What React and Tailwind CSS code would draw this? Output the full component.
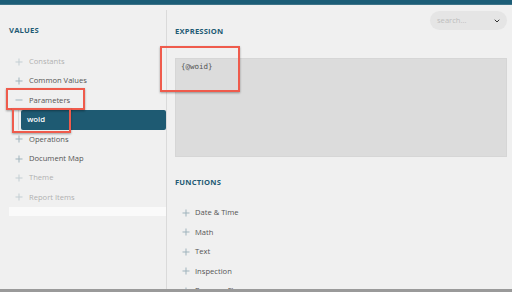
import { ChevronDown } from 'lucide-react'

const values = [
    { label: 'Constants', muted: true },
    { label: 'Common Values' },
    { label: 'Parameters', open: true },
    { label: 'woid', child: true },
    { label: 'Operations' },
    { label: 'Document Map' },
    { label: 'Theme', muted: true },
    { label: 'Report Items', muted: true },
]

const functions = ['Date & Time', 'Math', 'Text', 'Inspection', 'Program Flow']

function Plus({ muted }) {
    return (
        <svg width="8" height="8" viewBox="0 0 8 8" className="shrink-0">
            <path d="M4 0.5V7.5M0.5 4H7.5" stroke={muted ? '#c3ced3' : '#9fb3bc'} strokeWidth="1" />
        </svg>
    )
}

function Minus() {
    return (
        <svg width="8" height="8" viewBox="0 0 8 8" className="shrink-0">
            <path d="M0.5 4H7.5" stroke="#9fb3bc" strokeWidth="1" />
        </svg>
    )
}

function Heading({ children }) {
    return (
        <div className="shrink-0 text-[7.6px] leading-[11px] font-bold tracking-[0.2px] text-[#1e5a73] uppercase">
            {children}
        </div>
    )
}

export default function App() {
    return (
        <div className="relative w-[512px] h-[292px] overflow-hidden flex flex-col bg-[#f0f0f0] font-['Open_Sans',sans-serif]">
            {/* top bar */}
            <div className="h-[5px] shrink-0 bg-[#1c5d77] border-b border-[#3d7388]" />

            <div className="flex flex-1 min-h-0">
                {/* values panel */}
                <div className="w-[166px] shrink-0 flex flex-col pt-[20px]">
                    <div className="pl-[9px]">
                        <Heading>Values</Heading>
                    </div>
                    <div className="flex flex-col mt-[16px]">
                        {values.map(item => item.child ? (
                            <div key={item.label} className="flex h-[19.4px] shrink-0">
                                <div className="w-[20px] flex justify-end pr-[1px]">
                                    <div className="w-[1px] h-full bg-[#d8d8d8]" />
                                </div>
                                <div className="flex-1 ml-[1px] flex items-center pl-[6px] bg-[#1e5a72] rounded-[2px] text-[7.8px] font-semibold text-white">
                                    {item.label}
                                </div>
                            </div>
                        ) : (
                            <div key={item.label} className="flex items-center h-[19.4px] shrink-0 pl-[15px] gap-[6px]">
                                {item.open ? <Minus /> : <Plus muted={item.muted} />}
                                <span className={`text-[7.6px] ${item.muted ? 'text-[#b0b0b0]' : 'text-[#555]'}`}>
                                    {item.label}
                                </span>
                            </div>
                        ))}
                    </div>
                    <div className="ml-[9px] h-[9px] shrink-0 bg-[#fafafa]" />
                </div>

                {/* expression panel */}
                <div className="flex-1 min-w-0 flex flex-col mt-[5px] border-l border-[#dadada] pl-[8px] pr-[5px]">
                    <div className="flex justify-end shrink-0">
                        <div className="w-[77px] h-[19px] mt-[1px] rounded-full bg-[#e5e5e5] flex items-center justify-between pl-[7px] pr-[6px]">
                            <span className="text-[7.6px] text-[#bdbdbd]">search...</span>
                            <ChevronDown size={8} strokeWidth={3} className="text-[#333]" />
                        </div>
                    </div>
                    <div className="-mt-[4px] shrink-0">
                        <Heading>Expression</Heading>
                    </div>
                    <div className="mt-[21px] h-[99px] shrink-0 bg-[#dcdcdc] border border-[#d6d6d6] px-[5px] pt-[3px]">
                        <div className="font-['DejaVu_Sans_Mono',monospace] text-[7.5px] leading-[10px] text-[#555]">{'{@woid}'}</div>
                    </div>
                    <div className="mt-[20px] shrink-0">
                        <Heading>Functions</Heading>
                    </div>
                    <div className="flex flex-col mt-[15px] pl-[7px] shrink-0">
                        {functions.map(label => (
                            <div key={label} className="flex items-center h-[19.5px] shrink-0 gap-[5px]">
                                <Plus />
                                <span className="text-[7.6px] text-[#555]">{label}</span>
                            </div>
                        ))}
                    </div>
                </div>
            </div>

            {/* bottom edge */}
            <div className="absolute left-0 right-0 bottom-0 h-[3px] bg-[#9a9a9a]" />

            {/* annotation boxes */}
            <div className="absolute left-[6px] top-[88px] w-[79px] h-[22px] border-[2.5px] border-[#ef5b4c] shadow-[0_1px_2px_rgba(0,0,0,0.35)]" />
            <div className="absolute left-[12px] top-[108px] w-[59px] h-[25px] border-[2.5px] border-[#ef5b4c] shadow-[0_1px_2px_rgba(0,0,0,0.35)]" />
            <div className="absolute left-[160px] top-[46px] w-[80px] h-[46px] border-[2.5px] border-[#ef5b4c] shadow-[0_1px_2px_rgba(0,0,0,0.35)]" />
        </div>
    )
}
